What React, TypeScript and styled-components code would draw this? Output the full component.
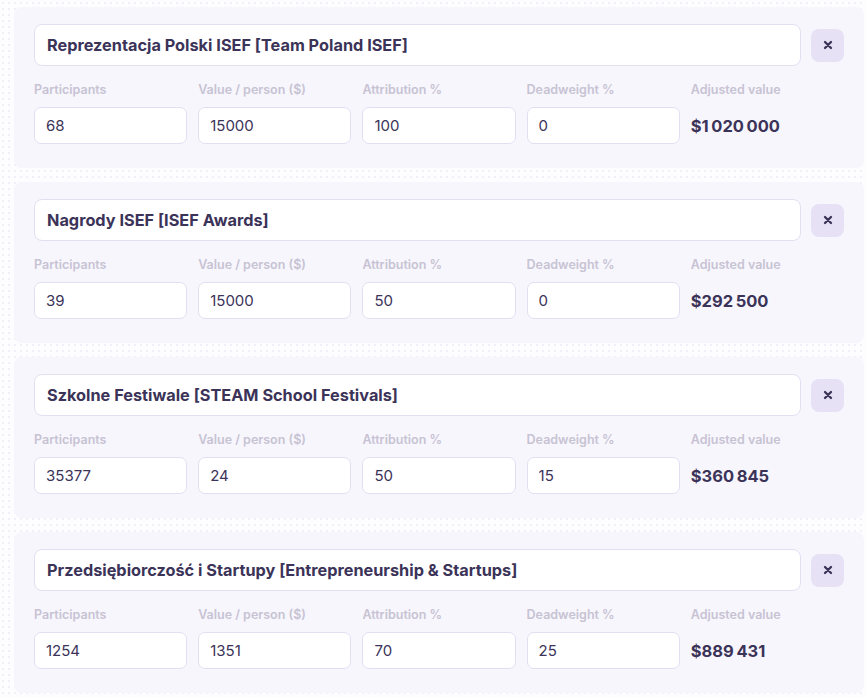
import React from "react";
import styled, { createGlobalStyle } from "styled-components";

const GlobalStyle = createGlobalStyle`
  html, body {
    margin: 0;
    padding: 0;
  }
  body {
    font-family: Inter, "Noto Sans", sans-serif;
    background-color: #fdfdff;
    background-image: radial-gradient(#f1eff8 0.8px, transparent 0.9px);
    background-size: 6px 6px;
    color: #3b3358;
  }
`;

const Page = styled.div`
  display: flex;
  flex-direction: column;
  gap: 14px;
  padding: 7px 2px 4px 14px;
`;

const Card = styled.section`
  background: #f7f6fd;
  border-radius: 8px;
  padding: 17px 20px 24px 20px;
  display: flex;
  flex-direction: column;
  gap: 16px;
`;

const TitleRow = styled.div`
  display: flex;
  align-items: center;
  gap: 10px;
`;

const TitleInput = styled.input`
  flex: 1;
  height: 42px;
  box-sizing: border-box;
  border: 1px solid #e3dff3;
  border-radius: 8px;
  background: #fff;
  padding: 0 12px;
  font-family: Inter, sans-serif;
  font-size: 16.3px;
  font-weight: 700;
  color: #3b3358;
  outline: none;
`;

const CloseButton = styled.button`
  width: 33px;
  height: 33px;
  flex: none;
  border: none;
  border-radius: 8px;
  background: #e6e1f5;
  display: flex;
  align-items: center;
  justify-content: center;
  padding: 0;
  cursor: pointer;
`;

const Fields = styled.div`
  display: grid;
  grid-template-columns: repeat(5, 1fr);
  column-gap: 11px;
`;

const Field = styled.div`
  display: flex;
  flex-direction: column;
  gap: 9px;
`;

const Label = styled.span`
  font-size: 12.5px;
  font-weight: 600;
  color: #c7c3d3;
  line-height: 16px;
`;

const NumInput = styled.input`
  height: 37px;
  box-sizing: border-box;
  border: 1px solid #e3dff3;
  border-radius: 7px;
  background: #fff;
  padding: 0 11px;
  font-family: Inter, sans-serif;
  font-size: 15px;
  color: #3b3358;
  outline: none;
  width: 100%;
`;

const Value = styled.div`
  height: 37px;
  display: flex;
  align-items: center;
  font-size: 16.5px;
  font-weight: 700;
  color: #3b3358;
`;

type Row = {
  title: string;
  participants: number;
  value: number;
  attribution: number;
  deadweight: number;
};

const rows: Row[] = [
  { title: "Reprezentacja Polski ISEF [Team Poland ISEF]", participants: 68, value: 15000, attribution: 100, deadweight: 0 },
  { title: "Nagrody ISEF [ISEF Awards]", participants: 39, value: 15000, attribution: 50, deadweight: 0 },
  { title: "Szkolne Festiwale [STEAM School Festivals]", participants: 35377, value: 24, attribution: 50, deadweight: 15 },
  { title: "Przedsiębiorczość i Startupy [Entrepreneurship & Startups]", participants: 1254, value: 1351, attribution: 70, deadweight: 25 },
];

// grupowanie tysięcy spacją jak w pl-PL
const fmt = (n: number) => {
  const s = Math.round(n).toString();
  return "$" + s.replace(/\B(?=(\d{3})+(?!\d))/g, "\u2009");
};

export default function App() {
  return (
    <>
      <GlobalStyle />
      <Page>
        {rows.map((r) => {
          const adjusted =
            r.participants * r.value * (r.attribution / 100) * (1 - r.deadweight / 100);
          return (
            <Card key={r.title}>
              <TitleRow>
                <TitleInput defaultValue={r.title} />
                <CloseButton aria-label="Remove">
                  <svg width="10" height="10" viewBox="0 0 10 10">
                    <path d="M2 2 L8 8 M8 2 L2 8" stroke="#3b3358" strokeWidth="2.3" strokeLinecap="round" />
                  </svg>
                </CloseButton>
              </TitleRow>
              <Fields>
                <Field>
                  <Label>Participants</Label>
                  <NumInput defaultValue={r.participants} />
                </Field>
                <Field>
                  <Label>Value / person ($)</Label>
                  <NumInput defaultValue={r.value} />
                </Field>
                <Field>
                  <Label>Attribution %</Label>
                  <NumInput defaultValue={r.attribution} />
                </Field>
                <Field>
                  <Label>Deadweight %</Label>
                  <NumInput defaultValue={r.deadweight} />
                </Field>
                <Field>
                  <Label>Adjusted value</Label>
                  <Value>{fmt(adjusted)}</Value>
                </Field>
              </Fields>
            </Card>
          );
        })}
      </Page>
    </>
  );
}
